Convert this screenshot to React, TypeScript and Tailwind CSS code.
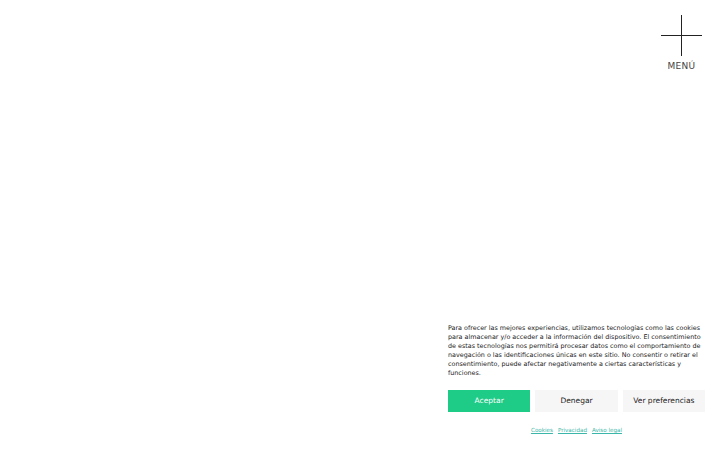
import React from 'react';

export default function App() {
  return (
    <div className="relative w-[720px] h-[450px] bg-white overflow-hidden font-['DejaVu_Sans',sans-serif]">
      {/* Menu toggle */}
      <button className="absolute top-[15px] right-[18px] flex flex-col items-center">
        <span className="relative block w-[41px] h-[41px]">
          <span className="absolute left-0 right-0 top-[20px] h-px bg-[#222]" />
          <span className="absolute top-0 bottom-0 left-[20px] w-px bg-[#222]" />
        </span>
        <span className="mt-[5px] text-[9px] leading-[10px] tracking-[0.3px] text-[#444]">MENÚ</span>
      </button>

      {/* Cookie banner */}
      <div className="absolute right-[15px] bottom-[16px] w-[257px]">
        <p className="text-[6.4px] leading-[9px] text-[#222]">
          Para ofrecer las mejores experiencias, utilizamos tecnologías como las cookies para almacenar y/o acceder a la información del dispositivo. El consentimiento de estas tecnologías nos permitirá procesar datos como el comportamiento de navegación o las identificaciones únicas en este sitio. No consentir o retirar el consentimiento, puede afectar negativamente a ciertas características y funciones.
        </p>
        <div className="mt-[12px] grid grid-cols-3 gap-[5px]">
          <button className="h-[22px] bg-[#1ecb87] text-white text-[7.5px]">Aceptar</button>
          <button className="h-[22px] bg-[#f6f6f6] text-[#222] text-[7.5px]">Denegar</button>
          <button className="h-[22px] bg-[#f6f6f6] text-[#222] text-[7.5px]">Ver preferencias</button>
        </div>
        <div className="mt-[14px] flex justify-center gap-[5px] text-[5.6px] leading-[8px] text-[#3ab7a8]">
          <a className="underline">Cookies</a>
          <a className="underline">Privacidad</a>
          <a className="underline">Aviso legal</a>
        </div>
      </div>
    </div>
  );
}
